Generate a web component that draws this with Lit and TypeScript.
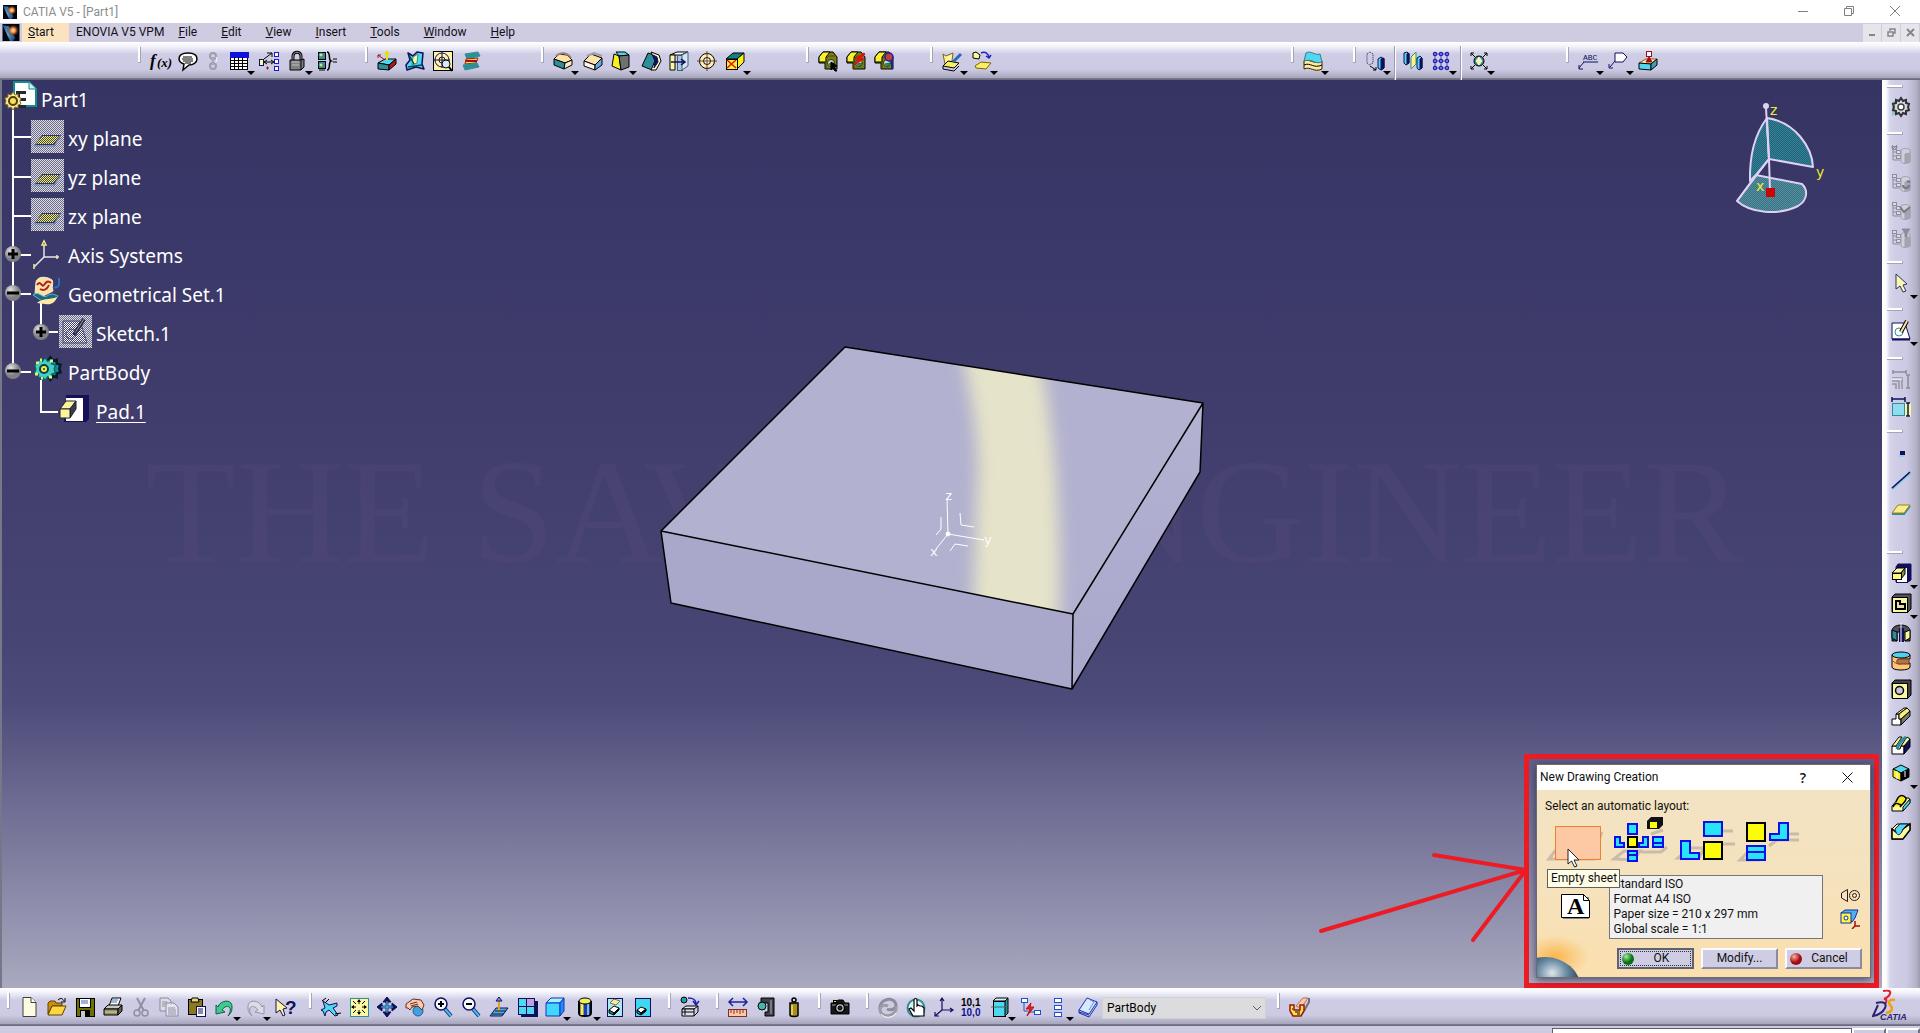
import { LitElement, html, svg, css, nothing } from "lit";
import { customElement, property } from "lit/decorators.js";

const K = "#000";
const N = "#10105a";
const Y = "#fbf7a0";
const T = "#2f8f98";
const C = "#4fd8f0";

const poly = (points: string, fill: string, stroke = K, w = 1) =>
  svg`<polygon points=${points} fill=${fill} stroke=${stroke} stroke-width=${w} stroke-linejoin="round"/>`;
const line = (d: string, stroke = K, w = 1, fill = "none") =>
  svg`<path d=${d} fill=${fill} stroke=${stroke} stroke-width=${w}/>`;
const box = (x: number, y: number, w: number, h: number, fill: string, stroke = K, sw = 1) =>
  svg`<rect x=${x} y=${y} width=${w} height=${h} fill=${fill} stroke=${stroke} stroke-width=${sw} shape-rendering="crispEdges"/>`;
const dot = (x: number, y: number, r: number, fill: string, stroke = K, w = 1) =>
  svg`<circle cx=${x} cy=${y} r=${r} fill=${fill} stroke=${stroke} stroke-width=${w}/>`;

const greyCatalog = (extra: unknown) => svg`
  ${line("M2 3v13h7M2 8h6M2 12h6", "#8c8c9c")}
  ${box(1, 2, 4, 3, "#dcdce8", "#8c8c9c")}${box(5, 6, 4, 3, "#dcdce8", "#8c8c9c")}
  ${box(5, 11, 4, 3, "#dcdce8", "#8c8c9c")}
  ${line("M10 6c2-2 6-2 9 0v12c-3 2-7 2-9 0z", "#a0a0ae", 1, "#cfcfda")}
  ${line("M14 10l5-1v9l-5 1z", "#a0a0ae", 1, "#a4a4b2")}${extra}`;

const gearPath =
  "M10 1l2 3 3-1 0 3 3 1-1 3 1 3-3 1 0 3-3-1-2 3-2-3-3 1 0-3-3-1 1-3-1-3 3-1 0-3 3 1z";

const catalogHole = (extra: unknown) => svg`
  ${poly("1,6 5,1 15,1 19,6 19,18 7,18 7,12 1,12", "#7c7c18")}
  ${poly("1,6 5,1 12,1 8,6 8,11 1,11", "#f8f030")}
  ${line("M8 18V8l3-3h6", "#4c4c08")}
  ${dot(13, 12, 3.5, "#d4d4dc", "#303000")}${line("M11 13l3 2 2-3z", "#008040", 1, "#20a060")}${extra}`;

const magnifier = (sign: string) => svg`
  ${line("M12 12l6 7", "#103878", 4)}${line("M12 12l6 7", "#50b8f0", 2)}
  ${dot(8, 7, 6, "#f4fcff", N, 1.5)}${line(sign, K, 2)}`;

const icons: Record<string, unknown> = {
  formula: svg`<text x="0" y="15" class="fx">f</text><text x="7" y="16" class="fxs">(x)</text>`,
  comment: svg`${line("M10 2c6 0 9 2.500 9 6s-4 6-8 6l-6 5 1-6c-3-1-5-3-5-5 0-4 4-6 9-6z", K, 1.5, "#fff")}
    ${line("M5 6h9M4 8h11M5 10h10M7 12h6", K)}`,
  chain: svg`${dot(10, 5, 3, "none", "#9c9cac", 2)}${dot(10, 15, 3, "none", "#9c9cac", 2)}
    ${line("M10 6v8", "#a8a8b8", 2)}${line("M13 6c2 3 0 5-1 6", "#fff")}`,
  table: svg`${box(1.5, 1.5, 17, 17, "#fff")}${box(1, 1, 18, 5, "#1010e0", "#1010e0")}
    <path d="M5.500 6v12M9.500 6v12M13.500 6v12M2 9.500h16M2 12.500h16M2 15.500h16" stroke="#000" shape-rendering="crispEdges"/>`,
  relations: svg`${box(0.5, 8.5, 4, 6, "#fff6b0", N)}${line("M5 11h9M5 8l8-6M8 2h5v4M5 11l3-2M5 11l3 2M12 9l3 2-3 2", K)}
    ${box(15.5, 1.5, 4, 4, "#fff", "#1818d0")}${box(15.5, 8.5, 4, 4, "#fff", "#1818d0")}${box(15.5, 15.5, 4, 4, "#fff", "#1818d0")}
    ${line("M7 17h3M8.500 15.500v3", "#a01010")}`,
  lock: svg`${line("M6 10V5c0-5 8-5 8 0v5", K, 3)}${line("M6 10V5c0-5 8-5 8 0v5", "#a0a0a0", 1)}
    ${poly("3,9 14,9 17,8 17,16 14,19 3,19", "#808080")}${line("M14 9v10", K)}${line("M5 11h7M5 14h7", "#c0c0c0")}`,
  equations: svg`${box(1, 1, 7, 7, T, K)}${box(1, 10, 7, 7, T, K)}${dot(4, 4, 2, "#e0e060", T)}${dot(4, 14, 2, "#e0e060", T)}
    ${line("M10 1c4 0 1 8 4 9-3 1 0 9-4 9", K, 1.500)}${line("M16 8h4M16 11h4M2 19h6", K)}`,
  sketchTrace: svg`${poly("1,12 8,8 19,8 12,14", C)}${poly("1,12 12,14 12,19 1,18", T)}${poly("12,14 19,8 19,13 12,19", "#b01818")}
    ${line("M10 9V1M8 3l2-2 2 2", "#e8e000", 2)}${line("M8 9L1 4M1 7V4h3", "#a01010")}`,
  shape: svg`${poly("3,2 8,5 12,1 18,2 17,13 19,18 11,16 2,19 1,14 5,9", C, N, 1.500)}${poly("8,6 13,3 12,12 7,14", Y, T)}
    ${line("M3 16l14-2M4 4l5 9", "#004850", 1.500)}`,
  target: svg`${box(0.5, 0.5, 19, 19, "#fcf4a8", K)}${dot(9, 9, 7, "none", N, 1)}${dot(9, 9, 3, "none", N, 1)}
    ${line("M9 0v17M0 9h17", N)}${dot(13, 13, 4, "#d8e8f8", K)}${line("M16 16l3 4", K, 2)}`,
  stackS: svg`${poly("4,3 17,1 19,5 6,8", T, T)}${poly("5,8 17,7 15,12 4,13", "#f0e040", "#b01818")}
    ${poly("2,14 16,12 18,16 4,19", T, T)}${line("M5 10h11", "#a01010", 2)}`,
  fillet: svg`${poly("1,8 6,3 14,4 19,9 12,12", "#ffe4a8")}${poly("1,8 12,12 11,18 1,14", T)}${poly("12,12 19,9 19,14 11,18", "#f8ecc0")}
    ${line("M3 5c4-4 11-4 15 2", "#a08080", 2)}`,
  chamfer: svg`${poly("1,10 8,3 19,7 12,14", "#ffe4b0")}${poly("1,10 12,14 12,19 1,15", "#fff8e8")}${poly("12,14 19,7 19,14 12,19", "#68a8e0")}
    ${line("M4 5l7-3 8 3", "#a0a0a0", 2)}`,
  draft: svg`${poly("5,1 14,1 18,4 8,5", C)}${poly("3,3 8,5 10,19 1,15", "#f8f020")}${poly("8,5 18,4 18,16 10,19", "#707070")}`,
  shell: svg`${poly("7,2 16,5 11,19 1,15", T)}${poly("10,1 18,4 20,10 15,19 10,19 14,10", "#fff8c0")}${poly("12,4 16,6 17,11 13,17 14,10", N, N)}`,
  thickness: svg`${poly("1,4 8,1 19,1 12,4", "#fff")}${poly("1,4 6,4 6,19 1,19", Y)}${box(8, 4, 5, 15, "#a8c8e0", "#406080")}
    ${poly("13,4 19,1 19,15 13,19", "#d8e4f0", "#406080")}${line("M2 11h13M12 8l4 3-4 3", N, 1.500)}`,
  hole: svg`${dot(10, 10, 7.500, "#fcf0b8", K)}${dot(10, 10, 3.500, "#fff", K)}${line("M10 0v20M0 10h20", "#704010")}`,
  removeFace: svg`${poly("1,8 8,2 19,2 12,8", "#108080")}${poly("12,8 19,2 19,11 12,18", "#f8f020")}${box(1, 8, 11, 10, "#fcf030", K)}
    ${line("M2 9l9 8M11 9l-9 8", "#e01010", 1.500)}`,
  catArrow: catalogHole(line("M13 11l6 4-3 1 3 4-2 0-2-3-2 2z", K, 1, K)),
  catFlash: catalogHole(line("M18 2l-9 6 4 0-5 6 10-6-4-1 5-4z", "#e01010", 1, "#e01010")),
  catZoom: catalogHole(svg`${dot(15, 6, 4, "#c04040", "#2020a0", 1.500)}${line("M18 9v9", "#2020a0", 2)}`),
  sheetPen: svg`${poly("1,3 4,5 11,2 10,10 3,13", Y, "#806010")}${poly("1,15 6,10 17,12 12,17", "#f8f060")}${line("M1 15v3l11 2 5-5", K)}${line("M19 3l-8 8", "#2868c0", 3)}`,
  sheetCopy: svg`${poly("1,2 4,1 8,4 7,8 1,7", Y)}${line("M9 2c5-2 7 1 8 4M14 5l3 2 2-3", "#2020c0", 1.500)}
    ${poly("3,15 9,11 19,12 14,18 4,17", "#f8f060", "#806010")}`,
  layers: svg`${line("M1 10c6-3 8 4 18 0v8c-8 4-11-3-18 0z", "#302008", 1, "#fcec98")}${line("M3 2c5-3 9 3 14 1l2 8c-8 3-9-4-18-1z", "#407890", 1, C)}${line("M1 14c7-3 9 4 18 0", K)}`,
  moveCopy: svg`<path d="M2 3l3-2 3 2v9l-4 2-2-2z" fill="none" stroke="#202040" stroke-dasharray="1 1"/>${line("M5 15l6 4M8 19h3v-3", K)}
    ${poly("13,8 16,6 19,8 19,17 16,19 13,17", C, N)}${poly("16,8 19,7 19,17 16,19", N, N)}`,
  mirror: svg`${poly("1,2 4,1 6,3 6,12 3,14 1,12", C, N)}${poly("4,3 6,2 6,12 4,13", N, N)}${poly("8,6 13,1 13,13 8,18", "#fcf480", T)}
    ${poly("14,7 17,5 19,7 19,17 16,19 14,17", C, N)}${poly("17,8 19,7 19,17 17,18", N, N)}`,
  pattern: svg`${line("M4 3v14M10 3v14M16 3v14M2 3h16M2 10h16M2 17h16", "#4848c0")}
    ${[3, 10, 17].map((y) => [4, 10, 16].map((x) => dot(x, y, 1.5, "#e8e8ff", "#2020b0", 1.5)))}`,
  scale: svg`${line("M2 2l4 4M18 2l-4 4M2 18l4-4M18 18l-4-4M2 5V2h3M15 2h3v3M2 15v3h3M15 18h3v-3", K)}
    ${dot(10, 10, 5, T, K)}${poly("10,6 13,10 10,14 7,10", "#fcf8a0", "#f8f8d0")}`,
  textLeader: svg`<text x="5" y="9" class="abc">ABC</text>${line("M5 11h15M6 11l-5 6M1 14v4h4", N)}`,
  flagNote: svg`${line("M7 2h8l4 4-4 5H7z", N, 1, "#fff")}${line("M7 10l-5 6M1 13v4h4", N)}`,
  datum: svg`${poly("1,12 8,8 19,8 13,13", "#fff0b0", "#a05010")}${poly("1,12 13,13 13,19 1,18", C, K)}${poly("13,13 19,8 19,14 13,19", "#40a0b0")}
    ${box(8.5, 0.5, 5, 5, "#fff", "#a01010")}${poly("11,6 14,11 8,11", "#a01010", "#a01010")}`,
  gear: svg`${poly("1,5 9,1 19,9 1,19", "#90c8c0", "none")}<path d=${gearPath} fill="#d8d8d8" stroke="#303038" stroke-width="2"/>${dot(10, 10, 3, "#fff", "#404048", 1.500)}`,
  cat1: greyCatalog(line("M1 1l5 5M6 1L1 6M0 3h7", "#8c8c9c")),
  cat2: greyCatalog(line("M12 13a3 3 0 1 0 6 0M16 9l3 1", "#777786", 2)),
  cat3: greyCatalog(line("M9 7l4 5 6-5", "#777786", 2)),
  cat4: greyCatalog(poly("11,1 19,1 16,5 16,9 14,9 14,5", "#8c8c9c", "#8c8c9c")),
  select: svg`${poly("5,1 5,16 9,13 12,19 15,18 12,12 16,11", "#fcf6b0", "#203868", 1)}`,
  sketcher: svg`${poly("1,3 14,3 19,19 1,19", "#fff", N)}${line("M1 19.500h18", N, 2)}${dot(8, 12, 4, "none", T)}
    ${line("M16 1l-6 11", K, 4)}${line("M16 1l-6 11", "#f8e8a0", 2)}`,
  dimGrey: svg`${line("M2 3h13M2 1v4M15 1v4M17 6v13M15 6h4M15 19h4", "#8c8c9c", 1.500)}${line("M1 9h10v11M1 12h7v8M1 15h4v5", "#9494a4", 1.500)}${line("M1 10h10", "#fff")}`,
  dim: svg`${box(1.5, 6.5, 12, 12, "#90dcf0", T)}${box(14, 6, 5, 13, Y, Y)}${line("M1 2h13M1 0v5M14 0v5M17 6v13M15 6h4M15 19h4", N, 1.500)}`,
  point: svg`${box(9, 9, 4, 3, N, N)}${line("M8 14h6", C)}`,
  line: svg`${line("M1 19L19 3", "#60c0e8", 2)}${line("M1 18L19 2", N, 1.500)}`,
  plane: svg`${line("M1 16h12l6-8", T, 2)}${poly("1,15 7,7 19,7 13,15", "#fcea90", "#a08010")}`,
  pad: svg`${poly("5,4 7,1 20,1 20,17 17,19 5,19", N, N)}${box(5, 4, 11, 15, "#fff", N)}${poly("1,10 6,5 14,5 10,10", Y)}${poly("10,10 14,5 14,11 10,16", "#8c8c30")}${box(1, 10, 9, 6, "#fcf880")}`,
  pocket: svg`${poly("1,4 4,1 20,1 20,16 17,19 1,19", "#505058")}${box(1, 4, 15, 15, Y)}${line("M5 8h4v3h5v5H5z", K, 2, "#e8e0b0")}`,
  shaft: svg`${line("M1 8c0-8 18-8 18 0v10h-5V9H6v9H1z", K, 1, "#505058")}${poly("1,7 6,9 6,18 1,15", T)}${poly("14,9 19,7 19,15 14,18", Y)}${box(8, 5, 4, 13, N, N)}${line("M10 0v20", "#fff")}`,
  groove: svg`${line("M1 4v12c0 4 18 4 18 0v-4H9V8h10V4", K, 1, "#fcc878")}<ellipse cx="10" cy="4" rx="9" ry="3" fill="#50d0f0" stroke="#000"/>${line("M8 8h10v5H8c-3 0-3-5 0-5z", "#803010", 1, "#a87850")}${line("M2 10c3 3 5 3 8 3", "#c04010")}`,
  holeBox: svg`${poly("1,4 4,1 20,1 20,16 17,19 1,19", "#404048")}${box(1, 4, 15, 15, Y)}${dot(8.500, 11.500, 4, "#c8c8d8", K, 1.500)}`,
  rib: svg`${poly("1,18 1,12 5,12 5,7 8,7 8,12 10,12 10,18", "#fff")}${poly("10,12 19,4 19,9 10,18", "#787868")}${poly("5,7 13,1 16,1 8,7", Y)}${poly("8,7 16,1 19,4 10,12 8,12", "#f4f080")}`,
  slot: svg`${poly("1,19 1,11 5,11 6,14 9,14 10,11 13,11 13,19", "#fff")}${poly("13,11 19,4 19,12 13,19", N)}${poly("1,11 8,2 11,2 5,11", Y)}${poly("10,11 16,2 19,4 13,11", Y)}${line("M6 14c1-4 5-9 9-12", T, 3)}`,
  stiffener: svg`${poly("10,2 18,6 10,10 2,6", C)}${poly("2,6 10,10 10,18 2,14", "#f8f020")}${poly("10,10 18,6 18,14 10,18", K)}${line("M6 8v8M14 8v6", "#fff")}`,
  loft: svg`${poly("1,18 1,13 8,5 18,5 19,8 12,18", Y)}${line("M2 14c2-6 5-3 8-2M5 9c2-6 6-9 10-4 1 3-4 6-6 9", K, 1.500, "#f8e820")}${poly("12,14 19,6 19,10 12,18", C)}`,
  loftRemove: svg`${poly("1,18 1,8 6,3 19,3 19,9 12,18", Y)}${line("M1 8v10h11l7-9V3l-7 5-3 4-4-1z", K, 1.500, Y)}${line("M4 8c2 9 6 6 8 0l5-5H9z", N, 1, C)}`,
  newFile: svg`${line("M4 .5h8l5 5v14H4z", "#404040", 1, "#fcfce0")}${line("M12 .5v5h5", "#404040", 1, "#fff")}`,
  open: svg`${poly("1,6 3,4 8,4 9,6 15,6 15,9 5,9 1,17", "#c89010", "#604000")}${poly("1,18 5,9 19,9 15,18", "#fcd840", "#604000")}${line("M11 3c3-3 5-1 6 1M18 1v4h-4", K)}`,
  save: svg`${box(1, 1, 18, 18, "#707000", K)}${box(4, 1, 11, 9, "#fff", K)}${line("M6 4h7M6 6h7", "#4060c0")}${box(5, 13, 9, 6, K, K)}${box(6, 14, 3, 5, "#c8c8c8", "#c8c8c8")}`,
  print: svg`${poly("6,9 9,1 18,1 15,9", "#fff")}${line("M9 3h6M8 5h6", "#4070c0")}${poly("1,12 5,8 19,8 15,12", "#c8c8c0")}${poly("1,12 15,12 15,18 1,18", "#909080")}${poly("15,12 19,8 19,14 15,18", "#606050")}${line("M2 15h12", "#e0e040")}`,
  cut: svg`${line("M6 1l7 13M14 1L7 14", "#9090a0", 2)}${dot(6, 16, 3, "none", "#9090a0", 1.500)}${dot(14, 16, 3, "none", "#9090a0", 1.500)}`,
  copy: svg`${line("M1 1h8l3 3v10H1z", "#8888a0", 1, "#dcdce6")}${line("M7 6h8l4 4v9H7z", "#8888a0", 1, "#e4e4ee")}${line("M3 5h5M3 7h4M3 9h3M9 11h7M9 13h8M9 15h8M9 17h8", "#9090a4")}`,
  paste: svg`${box(1, 2, 14, 15, "#8c7820", K)}${poly("5,1 11,1 12,5 4,5", "#e0e080")}${box(9, 9, 9, 10, "#fff", N)}${line("M11 12h5M11 14h5M11 16h5", N)}`,
  undo: svg`${line("M3 10C5 3 18 1 17 11c0 4-2 6-4 8 6-9-1-13-6-6l3 2-9 2 0-9z", "#0c6040", 1, "#40c890")}`,
  redo: svg`${line("M17 10C15 3 2 1 3 11c0 4 2 6 4 8-6-9 1-13 6-6l-3 2 9 2 0-9z", "#9494a8", 1, "#dcdce8")}`,
  help: svg`${poly("1,2 1,16 5,13 8,19 10,18 8,12 12,11", "#fcf6a0", N)}<text x="10" y="17" class="qm">?</text>`,
  plane3: svg`${line("M2 4l6 4 8-2 0 3-4 2 5 7-3 1-6-6-3 2-1 4-2-5-2-1 4-2z", N, 1, C)}${line("M1 4l4-3M4 6l4-4M14 17l6-1", K)}`,
  fitAll: svg`${box(1, 1, 18, 18, "#fcf8a0", T)}${line("M10 3v4M10 13v4M3 10h4M13 10h4M4 4l3 3M16 4l-3 3M4 16l3-3M16 16l-3-3", K)}
    ${poly("10,2 12,5 8,5", K, K, 0)}${poly("10,18 12,15 8,15", K, K, 0)}${poly("2,10 5,8 5,12", K, K, 0)}${poly("18,10 15,8 15,12", K, K, 0)}`,
  pan: svg`${line("M10 3v14M3 10h14", "#205080", 3)}${poly("10,0 14,5 6,5", N, N)}${poly("10,20 14,15 6,15", N, N)}${poly("0,10 5,6 5,14", N, N)}${poly("20,10 15,6 15,14", N, N)}${line("M10 4v12M4 10h12", "#50b8f0")}`,
  rotate: svg`${dot(13, 14, 5, "#40a0e0", "#206090")}${line("M1 7l7-5 8 1 3 5-2 5-4-4-6 1-2 3-2-2-2 0z", "#603020", 1, "#fcc8b0")}${line("M5 7l7-2M6 9l7-2", "#603020")}`,
  zoomIn: magnifier("M5 7h6M8 4v6"),
  zoomOut: magnifier("M5 7h6"),
  normal: svg`${poly("1,19 7,11 19,11 13,19", "#50b0c8", N)}${line("M10 15V2", "#e0a020", 2)}${line("M7 4l3-4 3 4z", N, 1, "#8090f0")}${line("M3 17h12M6 14h11", N)}`,
  views: svg`${box(4, 4, 16, 15, N, N)}${box(1, 1, 8, 8, C, N)}${box(9, 1, 8, 8, "#c0a0e0", N)}${box(1, 9, 8, 8, C, N)}${box(9, 9, 8, 8, C, N)}`,
  iso: svg`${poly("1,6 6,1 19,1 15,6", "#a0f4ff", "#1830c0")}${poly("1,6 15,6 15,19 1,19", "#40d8ff", "#1830c0")}${poly("15,6 19,1 19,14 15,19", "#2090f0", "#1830c0")}`,
  shading: svg`${line("M4 4v12c0 4 12 4 12 0V4", K, 2, "#2838b0")}${line("M7 5v13", "#f8f040", 3)}${line("M13 5v13", "#60c8f0", 2)}<ellipse cx="10" cy="4" rx="6" ry="3" fill="#f0f060" stroke="#000"/>`,
  hideShow: svg`${box(2, 1, 15, 18, "#a8e8f0", N)}${poly("5,6 9,2 15,4 11,8", "#fce8a0", "#807040")}${poly("4,13 9,9 14,11 9,16", "#fff")}${poly("4,13 9,16 9,18 4,16", T)}${poly("9,16 14,11 14,13 9,18", K)}`,
  swap: svg`${box(2, 1, 15, 18, "#40d8f0", N)}${poly("4,13 8,10 13,12 8,16", "#fff")}${poly("4,13 8,16 8,18 4,16", T)}${poly("8,16 13,12 13,14 8,18", K)}`,
  snap: svg`${dot(4, 3, 3, "#20a0b0", K, 1)}${line("M8 1c5 0 8 1 8 6M13 4l3 4 3-4", "#2020b0", 1.500)}${poly("2,12 6,9 18,9 14,12", "#e8e8f0")}${poly("2,12 14,12 14,19 2,19", "#e0e0ec")}${line("M14 19l4-4V9M5 12v6M2 15h12", K)}`,
  measure: svg`${line("M1 5h18M5 1L1 5l4 4M15 1l4 4-4 4", "#2020a0", 1.500)}${box(0.5, 12.5, 18, 7, "#fcc8a8", "#803020")}${line("M3 13v3M6 13v4M9 13v3M12 13v4M15 13v3", "#803020")}`,
  caliper: svg`${line("M5 1h13v18h-9v-4h3V6H5z", K, 1, "#404048")}${dot(6, 9, 4, "#40b8b0", K)}${line("M15 3v14", "#b0b0b8")}`,
  weight: svg`${dot(10, 3, 2, "none", K, 1.500)}${line("M6 6h8v12c0 2-8 2-8 0z", K, 1.500, "#a89020")}${line("M8 8v10", "#e0d060", 2)}`,
  camera: svg`${poly("1,6 6,6 8,3 13,3 15,6 19,6 19,17 1,17", "#181818")}${box(3, 3, 3, 2, "#f0e860")}${line("M2 8h16", "#a0a0a0")}${dot(10, 11, 4.500, "#c0c0c8", K, 1.500)}${dot(10, 11, 2, "#202030")}`,
  update: svg`${line("M2 12C1 1 17-1 18 8c0 4-5 6-9 4", "#8c8c9a", 3)}${line("M18 9c2 11-15 13-16 4 0-4 4-6 8-4", "#9c9ca8", 3)}${line("M3 17c4 5 12 4 15-1", "#fff")}`,
  hand: svg`${dot(10, 11, 8.500, "#e0f4f4", T, 2)}${line("M7 19l-4-7 2-1 3 3V3c0-2 3-2 3 0v6l1-1 2 1 2 0 2 2v8z", K, 1.200, "#fff")}`,
  axis: svg`${line("M8 13V2M8 13h11M8 13l-7 6M6 4l2-3 2 3M16 11l3 2-3 2M1 15v4h4", N, 1.200)}`,
  decimals: svg`<text x="-1" y="9" class="num">10,1</text><text x="-1" y="19" class="num b">10,0</text>`,
  bodyBox: svg`${poly("3,4 6,1 18,1 15,4", "#d0f4f8")}${box(3, 4, 12, 15, C, K)}${poly("15,4 18,1 18,16 15,19", T)}${line("M1 10h14l4-3", "#40686c")}`,
  broken: svg`${box(1, 1, 6, 4, "#fff", "#2050d0")}${box(14, 13, 6, 4, "#fff", "#2050d0")}${line("M4 5v9h4M9 15h5", "#2050d0")}${line("M11 6l-5 6 4 0-3 7 7-9-4 0z", "#c01010", 1, "#e02020")}`,
  listBoxes: svg`${box(6, 1, 7, 4, "#fff", "#2050d0")}${box(6, 8, 7, 4, "#fff", "#2050d0")}${box(6, 15, 7, 4, "#fff", "#2050d0")}`,
  book: svg`${poly("1,13 9,1 19,5 11,17", "#d8e8ff", "#1830b0")}${line("M1 13v3l10 4 8-12V5M1 15l10 3", "#1830b0")}${line("M12 3l4 2-5 8", "#6090e0")}`,
  cutPart: svg`${line("M7 9l7-8 5 0-7 10z", "#b07050", 1, "#fcc8b0")}${line("M20 1v4l-5 9", "#707070", 2)}${line("M1 8h4v5h6V8h4v6l-3 5H4l-3-5z", "#a01010", 1.500, "#f8e840")}${line("M3 12h1M6 15h5M8 17h3", K)}`,
};

interface Tool {
  icon: string;
  label: string;
  menu?: boolean;
  slim?: boolean;
  off?: boolean;
}
interface Group {
  tools: Tool[];
  rule?: boolean;
  extra?: unknown;
}

/* "icon:Label:flags" where "+" opens a menu, "-" is a narrow slot and "!" is disabled. */
const tools = (...defs: string[]): Tool[] =>
  defs.map((d) => {
    const [icon, label, flags = ""] = d.split(":");
    return { icon, label, menu: flags.includes("+"), slim: flags.includes("-"), off: flags.includes("!") };
  });

const topGroups: Group[] = [
  { tools: tools("formula:Formula", "comment:Comment", "chain:Link:-", "table:Design Table:+", "relations:Relations", "lock:Lock:+", "equations:Equivalent Dimensions") },
  { tools: tools("sketchTrace:Create Sketch", "shape:Shape", "target:Tracer", "stackS:Section") },
  { tools: tools("fillet:Edge Fillet:+", "chamfer:Chamfer", "draft:Draft Angle:+", "shell:Shell", "thickness:Thickness", "hole:Thread", "removeFace:Remove Face:+") },
  { tools: tools("catArrow:Catalog", "catFlash:Power Copy", "catZoom:Search") },
  { tools: tools("sheetPen:Sheet:+", "sheetCopy:Copy Sheet:+") },
  { tools: tools("layers:Surface:+") },
  { tools: tools("moveCopy:Translation:+") },
  { tools: tools("mirror:Mirror", "pattern:Pattern:+"), rule: true },
  { tools: tools("scale:Scaling:+"), rule: true },
  { tools: tools("textLeader:Text with Leader:+", "flagNote:Flag Note:+", "datum:Datum") },
];

const sideGroups: Group[] = [
  { tools: tools("gear:Workbench") },
  { tools: tools("cat1:Catalog 1:!", "cat2:Catalog 2:!", "cat3:Catalog 3:!", "cat4:Catalog 4:!") },
  { tools: tools("select:Select:+") },
  { tools: tools("sketcher:Sketcher:+") },
  { tools: tools("dimGrey:Constraints:!", "dim:Constraint") },
  { tools: tools("point:Point", "line:Line", "plane:Plane") },
  { tools: tools("pad:Pad:+", "pocket:Pocket:+", "shaft:Shaft", "groove:Groove", "holeBox:Hole", "rib:Rib", "slot:Slot", "stiffener:Stiffener:+", "loft:Multi-sections Solid", "loftRemove:Removed Multi-sections Solid") },
];

const bottomGroups: Group[] = [
  { tools: tools("newFile:New", "open:Open", "save:Save", "print:Print", "cut:Cut:!", "copy:Copy:!", "paste:Paste", "undo:Undo:+", "redo:Redo:+", "help:What's This") },
  { tools: tools("plane3:Fly Mode", "fitAll:Fit All In", "pan:Pan", "rotate:Rotate", "zoomIn:Zoom In", "zoomOut:Zoom Out", "normal:Normal View", "views:Multi-View", "iso:Isometric View:+", "shading:Shading:+", "hideShow:Hide/Show", "swap:Swap Visible Space") },
  { tools: tools("snap:Snap") },
  { tools: tools("measure:Measure Between", "caliper:Measure Item", "weight:Measure Inertia") },
  { tools: tools("camera:Capture") },
  {
    tools: tools("update:Update All:!", "hand:Manual Update", "axis:Axis System", "decimals:Mean Dimensions", "bodyBox:Body:+", "broken:Isolate", "listBoxes:List:+", "book:Catalog Browser"),
    extra: html`<div class="combo">
      <select aria-label="In work object"><option>PartBody</option></select>
      <svg viewBox="0 0 10 6" aria-hidden="true"><path d="M1 1l4 4 4-4" /></svg>
    </div>`,
  },
  { tools: tools("cutPart:Sectioning") },
];

@customElement("tool-strip")
export class ToolStrip extends LitElement {
  @property({ attribute: false }) groups: Group[] = [];
  @property({ reflect: true }) place = "top";

  static styles = css`
    :host {
      display: grid;
      box-sizing: border-box;
      font-family: Roboto, "Open Sans", sans-serif;
      background: linear-gradient(#ffffff 0, #f4f4fb 4px, #cfcde5 12px, #cdcbe4 27px, #bcbbd2 31px, #a6a5bc 36px, #4c4c60 37px, #8c8ca0 100%);
    }
    :host([place="top"]) {
      grid-template-columns: 138px 227px 176px 265px 124px 361px 62px 41px 66px 106px 1fr;
      height: 38px;
    }
    :host([place="top"]) .group:first-child {
      grid-column: 2;
    }
    :host([place="bottom"]) {
      grid-template-columns: 302px 359px 48px 102px 48px 411px 1fr;
      height: 38px;
      padding-left: 7px;
    }
    :host([place="side"]) {
      grid-template-rows: 47px 129px 47px 49px 73px 121px 1fr;
      padding-top: 5px;
      background: linear-gradient(90deg, #ffffff 0, #fdfdff 4px, #d6d5ea 8px, #cfcde5 14px, #cdcbe4 24px, #b4b3c8 34px, #9c9bb0 100%);
    }
    .group {
      display: flex;
      align-items: center;
      min-width: 0;
    }
    :host([place="side"]) .group {
      flex-direction: column;
      align-items: flex-start;
      padding-left: 5px;
    }
    .grip {
      flex: none;
      width: 3px;
      height: 16px;
      margin: 0 5px 12px 0;
      box-sizing: border-box;
      background: #fff;
      border-right: 1px solid #a5a4b8;
      border-bottom: 1px solid #a5a4b8;
    }
    :host([place="side"]) .grip {
      width: 16px;
      height: 3px;
      margin: 0 0 5px;
    }
    .rule {
      flex: none;
      align-self: stretch;
      width: 2px;
      margin: 4px 3px 0 0;
      box-sizing: border-box;
      background: #fff;
      border-left: 1px solid #9a99ae;
    }
    button {
      position: relative;
      flex: none;
      display: flex;
      align-items: center;
      width: 28px;
      height: 28px;
      margin: 0;
      padding: 0 4px;
      border: 0;
      background: none;
    }
    button.menu {
      width: 30px;
    }
    button.slim {
      width: 23px;
      padding: 0 1px;
    }
    :host([place="side"]) button {
      width: 30px;
    }
    :host([place="side"]) button.menu {
      height: 30px;
      padding-bottom: 2px;
    }
    button svg {
      width: 20px;
      height: 20px;
      overflow: visible;
    }
    .caret {
      position: absolute;
      right: 0;
      bottom: 0;
      border: 4px solid transparent;
      border-top-color: #000;
      border-bottom: 0;
    }
    :host([place="side"]) .caret {
      right: -1px;
    }
    .fx {
      font: italic bold 17px "Liberation Serif", serif;
    }
    .fxs {
      font: italic bold 13px "Liberation Serif", serif;
    }
    .abc {
      font: 8px "Liberation Mono", monospace;
      fill: #10105a;
    }
    .qm {
      font: bold 19px "Liberation Sans", sans-serif;
      fill: #10105a;
    }
    .num {
      font: bold 10px "Liberation Sans", sans-serif;
      fill: #000;
    }
    .b {
      fill: #101090;
    }
    .combo {
      position: relative;
      width: 164px;
      height: 22px;
      margin-top: 2px;
    }
    .combo select {
      appearance: none;
      width: 100%;
      height: 100%;
      margin: 0;
      padding: 0 20px 0 4px;
      border: 1px solid #d0d0d4;
      border-radius: 0;
      background: #dcdcdf;
      color: #000;
      font: 12px Roboto, "Open Sans", sans-serif;
    }
    .combo svg {
      position: absolute;
      right: 4px;
      top: 8px;
      width: 10px;
      height: 6px;
      fill: none;
      stroke: #606068;
      pointer-events: none;
    }
  `;

  render() {
    return this.groups.map(
      (g) => html`<div class="group" role="toolbar">
        <span class=${g.rule ? "rule" : "grip"}></span>
        ${g.tools.map(
          (t) => html`<button
            class="${t.menu ? "menu" : ""} ${t.slim ? "slim" : ""}"
            aria-label=${t.label}
            ?disabled=${t.off}
          >
            <svg viewBox="0 0 20 20" aria-hidden="true">${icons[t.icon]}</svg>
            ${t.menu ? html`<span class="caret"></span>` : nothing}
          </button>`
        )}
        ${g.extra ?? nothing}
      </div>`
    );
  }
}

/* ---------- specification tree ---------- */

const planeIcon = svg`
  <rect width="33" height="33" fill="url(#mesh)"/>
  <polygon points="4,25 11,15 30,15 23,25" fill="#34345c"/>
  <polygon points="5,24 11,16 29,16 22,24" fill="url(#meshY)"/>
  <path d="M3 26h20l6-8" stroke="#5a86b8" fill="none"/>`;

const treeIcons: Record<string, unknown> = {
  part: svg`
    <path d="M10 1h15l7 7v17H10z" fill="#fff" stroke="#138c90" stroke-width="2"/>
    <path d="M25 1v7h7" fill="#d0f0f0" stroke="#138c90"/>
    <path d="M12 10h10v3h-6v4h6v3h-6v4h6v3H12z" fill="#262830"/>
    <path transform="translate(-1 10)" d=${gearPath} fill="#fbe99a" stroke="#8a7420"/>
    <circle cx="9" cy="20" r="4" fill="#f8e060" stroke="#504000" stroke-width="2"/>`,
  plane: planeIcon,
  axes: svg`<path d="M13 20V5M13 20h15M13 20L3 30" stroke="#e8e4ec" stroke-width="1.500" fill="none"/>
    <path d="M11 8l2-4 2 4zM26 18v4M3 27v5" stroke="#f4ec90" fill="#101030" stroke-width="1.500"/>`,
  geoset: svg`
    <path d="M5 6c2-7 12-5 16-2 2 3-1 6 1 11l-10 5-8-2z" fill="#fbe2a8" stroke="#f8f0d0"/>
    <path d="M6 9c3-6 5 3 7 0s4-5 7-2M9 13c3 2 7 1 9-4" stroke="#b02020" stroke-width="2" fill="none"/>
    <path d="M2 19c6-5 9 4 14 1s6-2 11 0l-4 5-12 0z" fill="#206878" stroke="#58b8d8"/>
    <path d="M6 27c5-5 12-3 20-6-2 6-6 8-12 7z" fill="#fbe9a8"/>
    <path d="M28 2v7c-2 3-4 3-5 2" stroke="#2c70b8" stroke-width="2" fill="none"/>`,
  sketch: svg`<rect width="33" height="33" fill="url(#mesh)"/>
    <path d="M4 6h17l7 22H4z" fill="url(#meshW)" stroke="#44446c"/>
    <path d="M25 4L15 20" stroke="#282850" stroke-width="4"/><path d="M25 4L16 18" stroke="#a0a070" stroke-width="1"/>
    <circle cx="12" cy="19" r="5" fill="none" stroke="#4a4a78"/>`,
  body: svg`<g transform="translate(1 1)">
    <path transform="translate(6 1) scale(1.250)" d=${gearPath} fill="#18888c" stroke="#021c28" stroke-width="2"/>
    <path transform="translate(0 1) scale(1.300)" d=${gearPath} fill="#40d0c8" stroke="#0c6070"/>
    <path d="M4 8h3M8 5h2M18 6h3M3 19h3M17 22h3M9 23h2" stroke="#e8f070" stroke-width="3"/>
    <circle cx="12" cy="14" r="4" fill="#f4f040" stroke="#084048" stroke-width="2"/><circle cx="12" cy="14" r="1" fill="#084048"/></g>`,
  pad: svg`<path d="M7 2h23v24l-3 3H5z" fill="#15105a"/><rect x="7" y="5" width="17" height="23" fill="#fff"/>
    <path d="M1 16l6-8h10l-6 8z" fill="#fbf59a" stroke="#202030"/><path d="M11 16l6-8v8l-6 9z" fill="#3a3a50" stroke="#202030"/>
    <path d="M1 16h10v9H1z" fill="#fbf59a" stroke="#202030"/>`,
};

interface TreeNode {
  icon: string;
  text: string;
  level: number;
  current?: boolean;
}
const treeNodes: TreeNode[] = [
  { icon: "part", text: "Part1", level: 0 },
  { icon: "plane", text: "xy plane", level: 1 },
  { icon: "plane", text: "yz plane", level: 1 },
  { icon: "plane", text: "zx plane", level: 1 },
  { icon: "axes", text: "Axis Systems", level: 1 },
  { icon: "geoset", text: "Geometrical Set.1", level: 1 },
  { icon: "sketch", text: "Sketch.1", level: 2 },
  { icon: "body", text: "PartBody", level: 1 },
  { icon: "pad", text: "Pad.1", level: 2, current: true },
];

const knob = (x: number, y: number, plus: boolean) => svg`
  <circle cx=${x} cy=${y} r="8" fill="url(#knob)"/>
  <path d=${plus ? `M${x - 5} ${y}h10M${x} ${y - 5}v10` : `M${x - 6} ${y}h12`} stroke="#000" stroke-width="3"/>`;

@customElement("spec-tree")
export class SpecTree extends LitElement {
  static styles = css`
    :host {
      display: block;
      color: #fff;
      font: 19px/39px "Noto Sans", "Open Sans", sans-serif;
    }
    .links {
      position: absolute;
      left: 0;
      top: 0;
      width: 60px;
      height: 351px;
    }
    ul {
      position: relative;
      margin: 0;
      padding: 0;
      list-style: none;
    }
    li {
      display: flex;
      align-items: center;
      gap: 4px;
      height: 39px;
    }
    li svg {
      flex: none;
      width: 33px;
      height: 33px;
      margin-bottom: 4px;
    }
    li span {
      padding-top: 2px;
    }
    .l0 {
      padding-left: 4px;
    }
    .l1 {
      padding-left: 31px;
    }
    .l2 {
      padding-left: 59px;
    }
    .current {
      text-decoration: underline;
      text-underline-offset: 3px;
    }
  `;

  render() {
    return html`
      <svg class="links" viewBox="0 0 60 351" aria-hidden="true">
        <defs>
          <radialGradient id="knob" cx=".35" cy=".3">
            <stop offset="0" stop-color="#e0e0e0" />
            <stop offset="1" stop-color="#808084" />
          </radialGradient>
        </defs>
        <path
          d="M13 26V291M13 57h18M13 97h18M13 136h18M13 175h18M13 214h18M41 222v30h17M13 292h18M41 300v32h17"
          fill="none"
          stroke="#fff"
          stroke-width="2"
          shape-rendering="crispEdges"
        />
        ${knob(13, 174, true)}${knob(13, 213, false)}${knob(41, 252, true)}${knob(13, 291, false)}
      </svg>
      <ul>
        ${treeNodes.map(
          (n) => html`<li class="l${n.level}">
            <svg viewBox="0 0 33 33" aria-hidden="true">
              <defs>
                <pattern id="mesh" width="2" height="2" patternUnits="userSpaceOnUse" shape-rendering="crispEdges">
                  <rect width="2" height="2" fill="#6c6c8e" /><rect width="1" height="1" fill="#dcdcde" /><rect x="1" y="1" width="1" height="1" fill="#dcdcde" />
                </pattern>
                <pattern id="meshY" width="2" height="2" patternUnits="userSpaceOnUse" shape-rendering="crispEdges">
                  <rect width="2" height="2" fill="#48482c" /><rect width="1" height="1" fill="#f0ec90" /><rect x="1" y="1" width="1" height="1" fill="#f0ec90" />
                </pattern>
                <pattern id="meshW" width="2" height="2" patternUnits="userSpaceOnUse" shape-rendering="crispEdges">
                  <rect width="2" height="2" fill="#404070" /><rect width="1" height="1" fill="#fff" /><rect x="1" y="1" width="1" height="1" fill="#fff" />
                </pattern>
              </defs>
              ${treeIcons[n.icon]}
            </svg>
            <span class=${n.current ? "current" : ""}>${n.text}</span>
          </li>`
        )}
      </ul>
    `;
  }
}

/* ---------- New Drawing Creation dialog ---------- */

const cy = (x: number, y: number, w: number, h: number) => box(x, y, w, h, "#28e4fa", "#0c10e8", 2);
const ye = (x: number, y: number, w: number, h: number) => box(x, y, w, h, "#fcfc08", "#000", 2);
const shade = (d: string) => svg`<path d=${d} fill="none" stroke="#c9bca8" stroke-width="3"/>`;

const layouts: { label: string; art: unknown }[] = [
  {
    label: "Empty sheet",
    art: svg`${shade("M2 37l9-12h40l-4 12zM48 14l6-2-5 18")}
      <rect x="8.500" y="4.500" width="45" height="33" fill="#fdc8a4" stroke="#f08030"/>`,
  },
  {
    label: "All views",
    art: svg`${shade("M3 37l10-8h16l-6 9zM30 30h20l6-5M40 12l12-4")}
      ${cy(17, 2, 9, 10)}${cy(17, 29, 9, 10)}${line("M17 33h9", "#0c10e8", 2)}
      ${ye(17, 15, 9, 10)}
      <path d="M4 15h5v6h4v4H4zM37 15h-5v6h-4v4h9z" fill="#28e4fa" stroke="#0c10e8" stroke-width="2"/>
      ${cy(42, 15, 10, 10)}${line("M42 21h10", "#0c10e8", 2)}
      <path d="M36 -1l4-4h12v8l-4 4H36z" fill="#101018"/><rect x="39" y="0" width="7" height="6" fill="#fcfc08"/>`,
  },
  {
    label: "Front, bottom and right",
    art: svg`${shade("M3 36l12-10h14l-5 10zM28 14l8-5h22M36 30l12-8h12")}
      ${cy(29, 0, 18, 14)}${ye(29, 20, 18, 17)}
      <path d="M6 19h9v12h9v6H6z" fill="#28e4fa" stroke="#0c10e8" stroke-width="2"/>`,
  },
  {
    label: "Front, top and left",
    art: svg`${shade("M1 38l8-8h16l-5 8zM30 24l8-6h22M42 12h18")}
      ${ye(8, 1, 18, 18)}${cy(8, 24, 18, 14)}${line("M8 30h18", "#0c10e8", 2)}
      <path d="M49 1h-9v11h-9v6h18z" fill="#28e4fa" stroke="#0c10e8" stroke-width="2"/>`,
  },
];

@customElement("drawing-dialog")
export class DrawingDialog extends LitElement {
  static styles = css`
    :host {
      display: block;
      width: 335px;
      box-sizing: border-box;
      border: 1px solid #6c6a74;
      background: #f6e3bf;
      color: #101010;
      font: 12px/15px Roboto, "Open Sans", sans-serif;
      box-shadow: 0 2px 8px rgba(20, 20, 50, 0.6);
    }
    header {
      display: flex;
      align-items: center;
      height: 25px;
      padding: 0 3px;
      background: #fff;
    }
    h2 {
      flex: 1;
      margin: 0;
      font: inherit;
    }
    header button {
      width: 22px;
      height: 22px;
      margin-left: 22px;
      padding: 0;
      border: 0;
      background: none;
      font: 600 14px "Open Sans", sans-serif;
      color: #101010;
    }
    header button:last-child {
      margin-right: 9px;
    }
    header svg {
      width: 11px;
      height: 11px;
      stroke: #101010;
      fill: none;
      display: block;
      margin: auto;
    }
    .body {
      position: relative;
      overflow: hidden;
      padding: 9px 8px 8px;
      background: linear-gradient(#f3e3c3, #f5e2bd 50%, #fbdfae);
    }
    .planet {
      position: absolute;
      left: 0;
      bottom: 0;
      width: 80px;
      height: 44px;
    }
    .layouts {
      display: flex;
      gap: 4px;
      margin-top: 8px;
      padding-left: 2px;
    }
    .layouts button {
      width: 60px;
      height: 44px;
      padding: 0;
      border: 0;
      background: none;
    }
    .layouts svg {
      display: block;
      width: 60px;
      height: 44px;
      overflow: visible;
    }
    .sheet {
      display: grid;
      grid-template-columns: 30px 214px 20px;
      justify-content: space-between;
      align-items: center;
      margin: 9px 2px 0 16px;
    }
    .sheet > svg {
      width: 30px;
      height: 26px;
    }
    .info {
      padding: 1px 4px;
      border: 1px solid #77757a;
      background: #f0f0f0;
    }
    .info p {
      margin: 0;
    }
    .views {
      display: grid;
      gap: 4px;
    }
    .views button {
      padding: 0;
      border: 0;
      background: none;
      height: 20px;
    }
    .views svg {
      display: block;
      width: 20px;
      height: 20px;
    }
    footer {
      position: relative;
      display: flex;
      justify-content: flex-end;
      gap: 7px;
      margin-top: 9px;
    }
    footer button {
      display: flex;
      align-items: center;
      width: 77px;
      height: 21px;
      padding: 0 3px;
      border: 2px solid;
      border-color: #fbfbff #8c8aa0 #8c8aa0 #fbfbff;
      background: #cfcde4;
      font: inherit;
      color: #101010;
    }
    footer span {
      flex: 1;
      text-align: center;
    }
    footer .ok {
      border-color: #606070;
      outline: 1px dotted #303038;
      outline-offset: -4px;
    }
    .ball {
      flex: none;
      width: 12px;
      height: 12px;
    }
    .tip {
      position: absolute;
      left: 10px;
      top: 79px;
      padding: 1px 2px 1px 3px;
      border: 1px solid #606060;
      background: #fffde6;
      white-space: nowrap;
      z-index: 1;
    }
    .pointer {
      position: absolute;
      left: 30px;
      top: 58px;
      width: 13px;
      height: 20px;
    }
  `;

  render() {
    const ball = (light: string, dark: string, id: string) => html`<svg class="ball" viewBox="0 0 12 12" aria-hidden="true">
      <defs><radialGradient id=${id} cx=".35" cy=".3"><stop offset="0" stop-color=${light} /><stop offset="1" stop-color=${dark} /></radialGradient></defs>
      <circle cx="6" cy="6" r="6" fill="url(#${id})" />
    </svg>`;
    return html`
      <header>
        <h2>New Drawing Creation</h2>
        <button aria-label="Help">?</button>
        <button aria-label="Close"><svg viewBox="0 0 11 11"><path d="M.5.5l10 10M10.500.5l-10 10" /></svg></button>
      </header>
      <div class="body">
        <svg class="planet" viewBox="0 0 80 44" aria-hidden="true">
          <defs>
            <radialGradient id="glow"><stop offset="0" stop-color="#fbb040" stop-opacity=".9" /><stop offset="1" stop-color="#f9b850" stop-opacity="0" /></radialGradient>
            <radialGradient id="globe" cx=".6" cy=".25"><stop offset="0" stop-color="#dfe6ea" /><stop offset=".4" stop-color="#6a8ca4" /><stop offset="1" stop-color="#0c1c30" /></radialGradient>
          </defs>
          <ellipse cx="18" cy="24" rx="34" ry="22" fill="url(#glow)" />
          <ellipse cx="8" cy="56" rx="36" ry="32" fill="url(#globe)" />
        </svg>
        <div>Select an automatic layout:</div>
        <div class="layouts">
          ${layouts.map((l) => html`<button aria-label=${l.label}><svg viewBox="0 0 60 44">${l.art}</svg></button>`)}
        </div>
        <div class="sheet">
          <svg viewBox="0 0 30 26" aria-hidden="true">
            <path d="M2 3h26v22H2z" fill="#808080" /><path d="M.5.5h22l6 6v17H.5z" fill="#fff" stroke="#000" /><path d="M22.500.5v6h6" fill="none" stroke="#000" />
            <text x="6" y="20" font-family="Liberation Serif, serif" font-weight="bold" font-size="24">A</text>
          </svg>
          <div class="info"><p>Standard ISO</p><p>Format A4 ISO</p><p>Paper size = 210 x 297 mm</p><p>Global scale = 1:1</p></div>
          <div class="views">
            <button aria-label="Projection method"><svg viewBox="0 0 20 20" fill="none" stroke="#301818"><path d="M7.500 4.500v12l-6-3.500v-5z" /><circle cx="14.500" cy="10.500" r="5" /><circle cx="14.500" cy="10.500" r="2" /></svg></button>
            <button aria-label="Axonometric view"><svg viewBox="0 0 20 20"><path d="M1 4l4-3h13l-3 8-3 4z" fill="#50b0f0" stroke="#1030a0" /><rect x="1" y="4" width="10" height="10" fill="#fcf840" stroke="#1030a0" /><circle cx="6" cy="9" r="2" fill="#fff" stroke="#1030a0" /><path d="M15 12v5h5M15 17l-3 3" stroke="#a01010" stroke-width="1.500" fill="none" /></svg></button>
          </div>
        </div>
        <footer>
          <button class="ok">${ball("#a0f0a0", "#087010", "green")}<span>OK</span></button>
          <button><span>Modify...</span></button>
          <button>${ball("#ffb0a0", "#a00c14", "red")}<span>Cancel</span></button>
        </footer>
        <div class="tip" role="tooltip">Empty sheet</div>
        <svg class="pointer" viewBox="0 0 13 20" aria-hidden="true"><path d="M1 1v15l3.500-3 3 6 2.500-1-3-6h5z" fill="#fff" stroke="#202020" /></svg>
      </div>
    `;
  }
}

/* ---------- application shell ---------- */

const cosmos = html`<svg viewBox="0 0 16 16" aria-hidden="true">
  <defs>
    <radialGradient id="c1"><stop offset="0" stop-color="#fff0c8" /><stop offset=".4" stop-color="#f08030" /><stop offset="1" stop-color="#000" stop-opacity="0" /></radialGradient>
    <linearGradient id="c2" x1="0" y1="0" x2="1" y2="1"><stop offset="0" stop-color="#104878" /><stop offset=".5" stop-color="#60a8e0" /><stop offset="1" stop-color="#103060" /></linearGradient>
  </defs>
  <rect width="16" height="16" fill="#02040c" />
  <path d="M0 1l6 1 6 11-2 3H7z" fill="url(#c2)" />
  <ellipse cx="10" cy="6" rx="6" ry="6" fill="url(#c1)" />
</svg>`;

const menus: [string, string][] = [
  ["F", "ile"],
  ["E", "dit"],
  ["V", "iew"],
  ["I", "nsert"],
  ["T", "ools"],
  ["W", "indow"],
  ["H", "elp"],
];

@customElement("app-root")
export class AppRoot extends LitElement {
  static styles = css`
    :host {
      display: flex;
      flex-direction: column;
      height: 100vh;
      overflow: hidden;
      background: #cdcbe3;
      font: 12px/16px Roboto, "Open Sans", sans-serif;
      color: #101018;
    }
    button {
      border: 0;
      padding: 0;
      background: none;
      font: inherit;
      color: inherit;
    }
    .title {
      display: flex;
      align-items: center;
      height: 23px;
      padding: 0 2px 0 3px;
      background: #fff;
      color: #8c8c8c;
    }
    .title h1 {
      flex: 1;
      margin: 0 0 0 6px;
      font: inherit;
    }
    .title > svg {
      width: 14px;
      height: 14px;
    }
    .title button {
      width: 46px;
      height: 23px;
    }
    .title button svg {
      width: 10px;
      height: 10px;
      fill: none;
      stroke: #808080;
    }
    .menu {
      display: flex;
      align-items: stretch;
      height: 19px;
      background: #cfcbe1;
    }
    .menu > svg {
      width: 18px;
      height: 17px;
      margin: 1px 2px;
    }
    .menu button {
      padding: 0 12px;
      line-height: 19px;
    }
    .menu .start {
      width: 47px;
      padding: 0 6px;
      text-align: left;
      background: #fbe3bf;
    }
    .menu .vpm {
      padding: 0 2px 0 7px;
    }
    .mdi {
      display: flex;
      gap: 1px;
      margin-left: auto;
      padding: 1px 1px 0;
    }
    .menu .mdi button {
      width: 18px;
      padding: 0;
      background: #e6e6ea;
    }
    .mdi svg {
      width: 9px;
      height: 9px;
      fill: none;
      stroke: #85858c;
      stroke-width: 2;
    }
    main {
      flex: 1;
      display: grid;
      grid-template-columns: 1fr 38px;
      min-height: 0;
    }
    .view {
      position: relative;
      overflow: hidden;
      min-width: 0;
      border-left: 2px solid #77778a;
      background: linear-gradient(#353463 0, #403d6d 36%, #474574 62%, #4e4c7a 69%, #a9a9c0 100%);
    }
    .scene {
      position: absolute;
      inset: 0;
      width: 100%;
      height: 100%;
    }
    .mark {
      font: 149px "Liberation Serif", serif;
      fill: #6a5478;
      opacity: 0.16;
    }
    .axis-label {
      font: 13px "Liberation Mono", monospace;
      fill: #fff;
    }
    .compass-label {
      font: 14px "DejaVu Sans", sans-serif;
      fill: #ecec30;
    }
    spec-tree {
      position: absolute;
      left: -2px;
      top: 0;
    }
    .compass {
      position: absolute;
      right: 52px;
      top: 18px;
      width: 100px;
      height: 120px;
    }
    .frame {
      position: absolute;
      right: 3px;
      bottom: 0;
      padding: 5px 3px 5px 7px;
      border: 5px solid #ed1c24;
    }
    .arrow {
      position: absolute;
      right: 355px;
      bottom: 32px;
      width: 212px;
      height: 110px;
    }
    .dock {
      position: relative;
    }
    .logo {
      position: absolute;
      right: 6px;
      top: 1px;
      width: 42px;
      height: 32px;
    }
    .logo text {
      font: italic bold 9px "Liberation Sans", sans-serif;
      fill: #2c2470;
    }
    .status {
      display: flex;
      justify-content: flex-end;
      height: 7px;
      padding-top: 2px;
      box-sizing: border-box;
      overflow: hidden;
    }
    .status input {
      box-sizing: border-box;
      width: 300px;
      height: 20px;
      margin: 0;
      border: 1px solid #606068;
      background: #fff;
    }
    .status button {
      width: 34px;
      height: 20px;
      border: 2px solid;
      border-color: #fff #707084 #707084 #fff;
      box-sizing: border-box;
      background: #cdcbe3;
    }
  `;

  render() {
    return html`
      <div class="title">
        ${cosmos}
        <h1>CATIA V5 - [Part1]</h1>
        <button aria-label="Minimize"><svg viewBox="0 0 10 10"><path d="M0 5.500h10" /></svg></button>
        <button aria-label="Restore"><svg viewBox="0 0 10 10"><path d="M.5 2.500h7v7h-7zM2.500 2.500v-2h7v7h-2" /></svg></button>
        <button aria-label="Close"><svg viewBox="0 0 10 10"><path d="M0 0l10 10M10 0L0 10" /></svg></button>
      </div>
      <nav class="menu">
        ${cosmos}
        <button class="start"><u>S</u>tart</button>
        <button class="vpm">ENOVIA V5 VPM</button>
        ${menus.map(([k, rest]) => html`<button><u>${k}</u>${rest}</button>`)}
        <span class="mdi">
          <button aria-label="Minimize document"><svg viewBox="0 0 9 9"><path d="M1 7h6" /></svg></button>
          <button aria-label="Restore document"><svg viewBox="0 0 9 9"><path d="M1 4h5v4H1zM3 3V1h5v4H6" stroke-width="1.500" /></svg></button>
          <button aria-label="Close document"><svg viewBox="0 0 9 9"><path d="M1 1l7 7M8 1L1 8" /></svg></button>
        </span>
      </nav>
      <tool-strip place="top" .groups=${topGroups}></tool-strip>
      <main>
        <section class="view" aria-label="3D view">
          <svg class="scene" viewBox="2 80 1880 908" aria-hidden="true">
            <defs>
              <clipPath id="top"><path d="M845 347L1203 403 1073 614 661 531z" /></clipPath>
              <linearGradient id="right" x1="0" y1="0" x2="0" y2="1"><stop offset="0" stop-color="#b3b2d2" /><stop offset="1" stop-color="#a9a8cc" /></linearGradient>
              <filter id="soft" x="-30%" width="160%"><feGaussianBlur stdDeviation="8 1" /></filter>
            </defs>
            <text class="mark" x="944" y="562" text-anchor="middle">THE SAVVY ENGINEER</text>
            <path d="M661 531L1073 614 1072 689 671 603z" fill="#a9a8cb" />
            <path d="M1203 403L1200 472 1072 689 1073 614z" fill="url(#right)" />
            <path d="M845 347L1203 403 1073 614 661 531z" fill="#b2b1cf" />
            <g clip-path="url(#top)">
              <path filter="url(#soft)" d="M956 330Q982 430 977 490L972 640H1058Q1066 470 1034 330z" fill="#e5e3c9" />
            </g>
            <path
              d="M845 347L1203 403 1073 614 661 531zM661 531L671 603 1072 689 1200 472 1203 403M1073 614L1072 689"
              fill="none" stroke="#000" stroke-width="1.500" stroke-linejoin="round"
            />
            <g stroke="#fff" fill="none">
              <path d="M948 534L947 499M948 534L984 540M948 534L936 549M941 517v12l-5 6M960 513l1 12 13 2M950 551l5-7 13 2" />
              <circle cx="948" cy="534" r="2" fill="#fff" />
            </g>
            <text class="axis-label" x="945" y="500">z</text>
            <text class="axis-label" x="984" y="544">y</text>
            <text class="axis-label" x="930" y="556">x</text>
          </svg>
          <spec-tree></spec-tree>
          <svg class="compass" viewBox="1730 98 100 120" aria-hidden="true">
            <defs>
              <pattern id="dots" width="2" height="2" patternUnits="userSpaceOnUse">
                <rect width="2" height="2" fill="#2e5c80" /><rect width="1" height="1" fill="#2a8890" /><rect x="1" y="1" width="1" height="1" fill="#2a8890" />
              </pattern>
              <pattern id="dots2" width="2" height="2" patternUnits="userSpaceOnUse">
                <rect width="2" height="2" fill="#456c88" /><rect width="1" height="1" fill="#4a949c" /><rect x="1" y="1" width="1" height="1" fill="#4a949c" />
              </pattern>
            </defs>
            <g stroke="#e0d0f4" stroke-width="2" stroke-linejoin="round">
              <path d="M1767 118Q1749 142 1750 181L1756 175 1769 159z" fill="url(#dots)" />
              <path d="M1767 118C1795 122 1812 147 1813 167L1769 159z" fill="url(#dots)" />
              <path d="M1756 175L1802 184C1808 190 1808 200 1798 206 1778 216 1750 213 1737 201z" fill="url(#dots2)" />
              <path d="M1766 108L1769 159 1770 190M1769 159L1737 201" fill="none" />
            </g>
            <circle cx="1766" cy="106" r="3" fill="#e0d0f4" />
            <rect x="1766" y="188" width="9" height="9" fill="#c80404" />
            <text class="compass-label" x="1770" y="115">z</text>
            <text class="compass-label" x="1816" y="177">y</text>
            <text class="compass-label" x="1756" y="191">x</text>
          </svg>
          <svg class="arrow" viewBox="1314 846 212 110" aria-hidden="true">
            <path d="M1320 931L1525 870M1433 855L1525 870L1472 940" fill="none" stroke="#ed1c24" stroke-width="4" stroke-linecap="round" />
          </svg>
          <div class="frame"><drawing-dialog></drawing-dialog></div>
        </section>
        <tool-strip place="side" .groups=${sideGroups}></tool-strip>
      </main>
      <div class="dock">
        <tool-strip place="bottom" .groups=${bottomGroups}></tool-strip>
        <svg class="logo" viewBox="0 0 42 32" aria-label="CATIA">
          <path d="M11 2c6-1 8 0 7 3-1 2-3 4-6 5 3 0 3 2 1 5" fill="none" stroke="#e02030" stroke-width="2" />
          <path d="M4 14c8-2 11 0 9 5-2 4-6 7-12 8l5-11" fill="none" stroke="#2c2470" stroke-width="2" />
          <path d="M23 11c-6-1-7 2-5 5 3 3 3 7-4 8" fill="none" stroke="#f0a010" stroke-width="2.500" />
          <text x="8" y="31">CATIA</text>
        </svg>
      </div>
      <div class="status">
        <input aria-label="Power input" />
        <button aria-label="Command"></button>
        <button aria-label="Options"></button>
      </div>
    `;
  }
}
